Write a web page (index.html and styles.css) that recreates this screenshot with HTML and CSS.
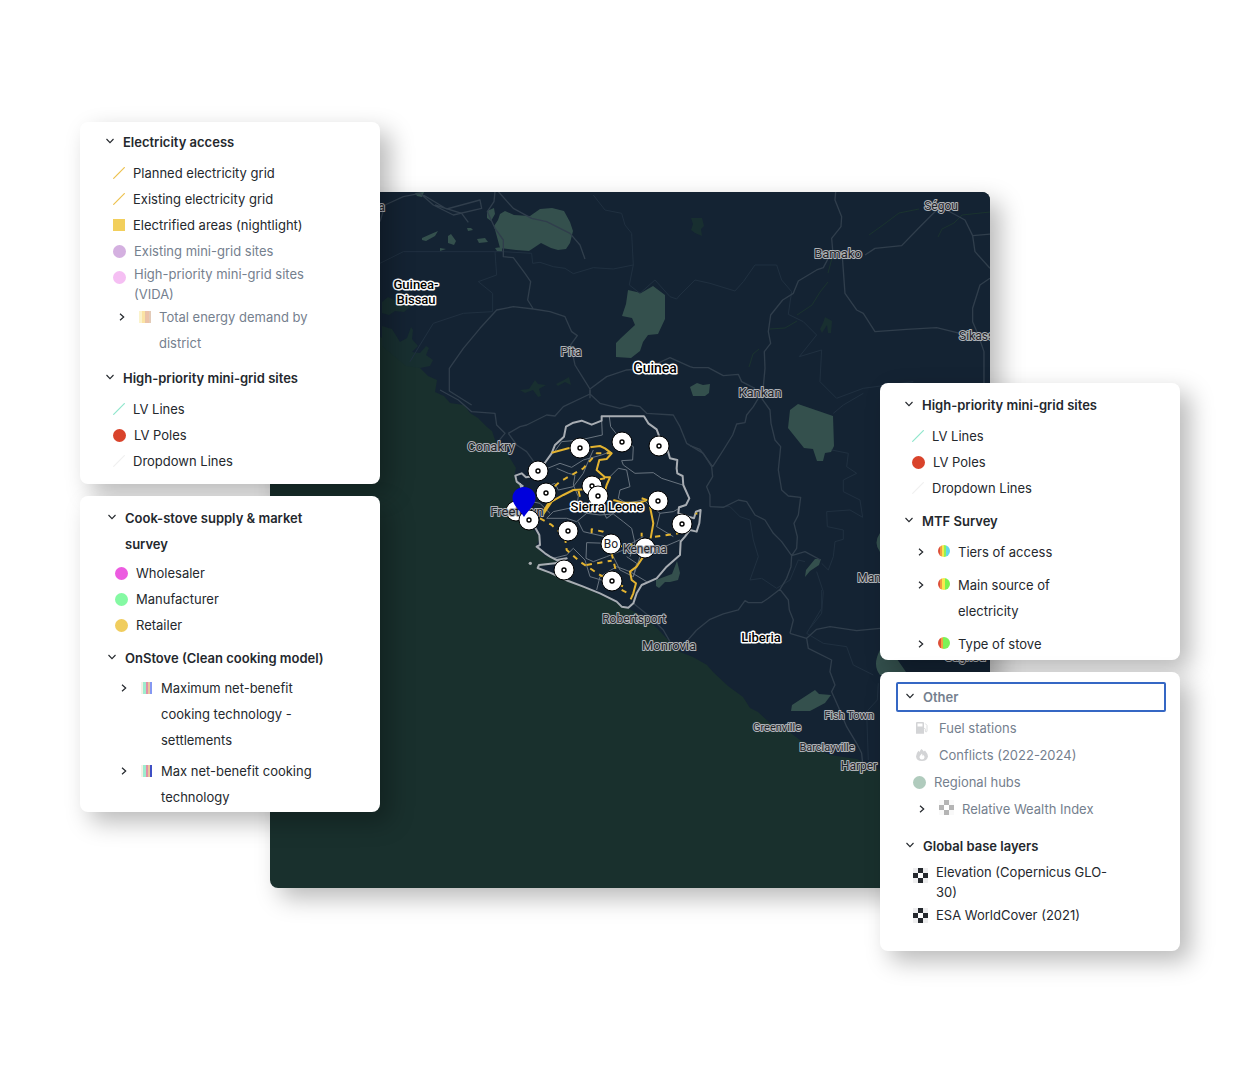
FILE: index.html
```html
<!DOCTYPE html>
<html lang="en">
<head>
<meta charset="utf-8">
<meta name="viewport" content="width=device-width, initial-scale=1">
<title>Sierra Leone energy access map</title>
<link rel="stylesheet" href="styles.css">
</head>
<body>
<svg class="defs" aria-hidden="true">
  <symbol id="down" viewBox="0 0 8 6"><path d="M.5 1 4 4.700 7.500 1" fill="none" stroke="currentColor" stroke-width="1.100"/></symbol>
  <symbol id="right" viewBox="0 0 6 8"><path d="M1 .7 4.700 4 1 7.300" fill="none" stroke="currentColor" stroke-width="1.200"/></symbol>
  <symbol id="line" viewBox="0 0 12 12"><path d="M.3 11.700 11.700.3" fill="none" stroke="currentColor" stroke-width="1.200"/></symbol>
  <symbol id="checks" viewBox="0 0 15 15"><path d="M0 0h15v15H0z" fill="currentColor" opacity=".08"/><path d="M5 0h5v5H5zM0 5h5v5H0zM10 5h5v5h-5zM5 10h5v5H5z" fill="currentColor"/><path d="M5 5h5v5H5z" fill="#fff"/></symbol>
  <symbol id="fuel" viewBox="0 0 12 12"><path fill="currentColor" fill-rule="evenodd" d="M1 0h6q1 0 1 1v10H0V1q0-1 1-1zm.5 1.500v3h5v-3zM0 11.200h8v.8H0z"/><path d="M8 6.500h.6q.7 0 .7.7V9q0 .9.800.9T11 9V3.500L9.300 1.500" fill="none" stroke="currentColor" stroke-width=".8"/></symbol>
  <symbol id="fire" viewBox="0 0 12 12"><path fill="currentColor" fill-rule="evenodd" d="M5.500 0Q7 1 7.800 2.600L9 1.500Q12 5 12 7.500 11 12 6 12 .5 12 0 7.500.3 4 2.500 1.800L3.600 2.900Q4.200 1 5.500 0zM6 4.500Q3.400 7 3.500 8.500 3.800 10.500 6 10.500T8.500 8.500Q8.600 7 7.600 6l-.9.900z"/></symbol>
</svg>

<main class="board">
  <figure class="map">
    <svg viewBox="270 192 720 696" preserveAspectRatio="xMidYMid slice" role="img" aria-label="Map of Sierra Leone and its neighbours">
      <rect class="sea" x="270" y="192" width="720" height="696"/>
      <path class="land" d="M270 192H990V800L930 782 880 770 868 764 857 759 830 755 815 748 800 740 784 728 770 723 758 712 750 708 743 697 728 686 713 672 707 665 693 657 680 652 668 640 657 628 643 617 628 608 600 595 570 580 538 567 555 564 562 560 545 556 536 546 540 538 534 530 529 530 514 516 513 510 524 504 526 490 518 482 514 477 516 468 507 453 500 447 495 440 492 431 487 427 478 418 470 413 464 405 450 403 444 396 435 392 437 380 428 376 420 368 410 363 404 354 397 350 390 344 382 338 340 310 270 300z"/>

      <!-- Wetlands and mangroves along the coast -->
      <g class="wet">
        <path d="M382 302l6-5 6 3 7-1 5 6 8-1-5 4-5 4-9-1-6 4-7-2zM382 326l10 3 8 13 7-4 4-11 2 3-1 9 6 7-6 6 8 1 6-7 3 2-3 7 7 5-3 6-10 2-14-2-24-20zM520 390l9-1 6-9 3 4 8 1-7 4 2 7-3 1-5-7-8 3zM556 384l8-4 5-3 2 8-6-3-7 4zM691 218l11 0 2 8-3 3 1 7-7-3-4-3 2-6zM825 317l7 4-1 12-3 0-1-8-5 8-2-4 3-6z"/>
        <path class="stroke" d="M869 235l14-10 16-12 20-4M938 237l4-8 12-6 8-8 28-3M797 315l15-10 8-13 8-10M770 329l15-1 12-7M749 367l4-13 6-5M828 273l4-15"/>
      </g>

      <!-- Parks -->
      <path class="park" d="M500 214l5-3 9 4 16 1 10-7 12-1 12 3 6 11 3 9-3 12-4 6-8 1-7-2-10-5-12 8-13-1-16-2-6-22 4-6zM487 211l7-3 1 6-4 7-4-3zM422 238l9-4 7-3-3 5-9 5-4-1zM448 236l3-2 5 7-2 4-6-2zM467 228h4l2 2-5 1zM477 239l8-1 3 4-9 1zM440 248l6 1-6 2zM495 248l7-1v5l-5-1zM415 193l9-1-2 5-5-1zM628 290l13 3 12-7 12 9v24l-7 15-10 1-5 7-3 9-9 7-15-1 0-14 5-5 14-13-3-7-10-2 4-12zM690 387l7-4 6 2 7-1-1 9-4 3-12 0zM788 428l2-18 8-6 35 12 1 30-3 6-6 1-2 8-6 0-4-12-9-1zM805 577l1-7 9-11 6 0-2 6-9 6zM791 711l1-6 23-15 4 4 12 1-6 8-15 8zM880 533q-7 10 0 19zM656 580l16-6 5-13 3 12-2 7-8 2-5 0-6 6-3-2zM880 650q-8 15 0 25h28q-12-18-16-22z"/>

      <!-- Country borders: north, then east, then the Liberian south-east -->
      <g class="border">
        <path transform="translate(380 185) scale(.3333)" d="M0 235 70 200H370L455 205 458 235 480 232 520 245 555 250 580 266 640 248 700 252 760 240 755 145 735 120 725 85 675 75 640 30M760 240 748 300 780 325 825 285 870 335 890 342 900 330 930 300 945 285 990 295 1065 318 1090 290 1125 240 1190 240 1205 285 1235 320 1225 388 1270 410 1310 450 1258 515 1325 495 1320 590 1370 640 1450 610 1600 590M345 200 350 270 295 290 338 325 338 380 250 385 160 415 120 480 90 530"/>
        <path transform="translate(690 390) scale(.3333)" d="M60 350 120 350 150 380 180 390 190 450 205 500 180 570 215 565 260 595 300 570 325 510 345 515M380 545 400 605 395 670 360 715M430 70 460 45 520 10M425 180 475 190 470 230 500 250 460 270 460 305 510 330 518 382 480 360 410 365 412 410 460 420 460 448 435 455 430 500 415 540 395 520"/>
        <path transform="translate(590 590) scale(.3333)" d="M695 0V55L650 130 700 160 770 170 790 225 850 255M865 280 862 330 830 365 835 510"/>
      </g>

      <!-- Main roads -->
      <g class="road">
        <path transform="translate(380 185) scale(.3333)" d="M345 20 342 50 322 80 345 130 370 165 370 215 400 218 435 265 452 290 443 345 460 372 510 380 555 395 575 440 592 452 572 480 585 540 610 580 630 612M355 20 400 70 455 100 500 110 570 145 600 180 615 222M460 372 400 365 350 375 300 430 250 490 208 550 208 618 275 660M630 612 680 575 740 555 800 550 870 518 930 545 940 548 985 548 1030 572 1075 568 1085 590 1125 610M630 612 630 640M0 110 15 60 70 35 120 25 160 60 220 90 305 70 300 45 200 72 130 30M265 112 245 85 165 60"/>
        <path transform="translate(680 185) scale(.3333)" d="M467 20 465 45 485 95 483 125 455 160 458 195 430 248 410 255 355 288 340 325 308 345 272 390 265 440 272 475 253 500 255 550 250 605M487 215 495 325 530 375 550 385 585 440 680 433 770 428 840 445M555 210 585 190 665 182 720 125 770 75M800 75 855 105 878 152 935 147M878 152 885 200 930 250M930 280 900 300 878 370 878 410 895 450 912 500 912 600"/>
        <path transform="translate(440 390) scale(.3333)" d="M0 0 55 30 95 65 165 70 170 105 195 130 170 160M205 130 240 110 260 105 320 75 345 78 370 50 450 12 480 40 540 55 570 45 600 50 620 70 700 75 720 110 740 160 790 190 815 230 818 260 800 290 810 315 810 350M450 12V0M205 130 230 165 260 185 285 220"/>
        <path transform="translate(690 390) scale(.3333)" d="M205 25 190 50 170 75 165 98 140 102 128 135 100 180 68 230M60 350 100 352 145 330 170 335 195 375 225 390 250 430 275 455 305 497 303 530 290 565 270 598 235 625 215 638 175 638 165 632 145 660 100 672 60 688 20 720M215 25 240 60 243 100 255 150 272 170 265 240 275 300 295 318 332 322 325 375 312 400 322 440 320 475 305 497 345 485 392 510M270 598 295 630 298 660 310 690 300 730M0 167 30 178 68 230"/>
        <path transform="translate(590 590) scale(.3333)" d="M320 120 285 160M130 40 180 80 220 120 240 155M600 130 650 145 655 175 725 210 720 245 735 285 725 305 745 350 770 410 800 460 815 490 818 520M650 145 680 118 720 110 800 122 870 115"/>
      </g>

      <g transform="translate(440 390) scale(.3333)">
        <!-- District boundaries -->
        <path class="district" d="M485 92 487 135 420 150 365 155 340 190M508 80 512 110 540 145 580 170 578 210 545 212 550 225 585 250 640 248 665 265 728 285M310 240 360 220 395 232 430 210 485 195 510 185M350 235 385 250 405 255 400 285 415 320 410 350 340 365 320 385 380 385 410 395 440 370 480 375 520 372 550 395 575 415 585 460 570 500M320 290 345 280 355 300 400 290M510 260 535 235 560 240 570 290 540 300 535 325 560 340M440 370 450 330 480 345 500 385 560 340 610 330 660 370 700 365 735 345M415 395 430 425 495 440 500 460 440 458 438 505 460 515 500 500 550 480 575 460 610 440M340 505 380 495 400 475 435 510 450 560 500 575M520 500 540 540 580 560 600 500 650 480 720 450M470 600 480 560 530 530 570 545 620 575M560 500 590 520 580 560M250 330 300 340 330 370M460 180 440 225 430 250 400 290M660 370 650 410 700 440"/>
        <!-- National border -->
        <path class="nation" d="M335 190 345 165 372 140 378 110 400 98 425 92 455 104 485 92V79H612L625 100 650 118 658 140 680 170 690 205 712 210 710 235 712 250 728 258 730 285 748 325 738 345 717 352 715 370 745 380 762 385 768 365 782 360 778 400 770 425 750 420 735 440 722 455 720 495 680 530 650 565 605 585 590 610 580 640 565 653 545 650 530 635 480 610 430 590 385 573 330 548 293 534 297 525 345 520 380 505 350 510 330 500 315 490 290 470 300 465 298 435 285 412M250 290 230 275 226 257 245 250 258 262 285 258 310 225 335 190M240 280 248 310"/>
        <circle cx="271" cy="520" r="5" fill="#a8adb0"/>
        <!-- Existing and planned grid -->
        <path class="grid" d="M335 188 385 175 420 172M450 172 480 168 495 175 515 190 500 207 478 210 470 240 495 262 510 262 500 285 490 320M495 265 480 268M520 330 550 338 600 338 620 330 605 325M630 350 640 400 632 445M610 500 590 530 570 545 575 570 588 580 580 610 572 628M310 365 325 340 370 315 400 300 440 298M305 380 335 335M415 300 420 320"/>
        <path class="grid dashed" d="M320 310 360 275 430 235 470 190 520 190M300 385 335 405 375 440 380 480 420 515 480 555 560 595M455 430V418L490 425 515 450M515 490 527 540M440 525 480 518 515 512M645 440 715 430M530 470 605 460 605 428M545 600 560 608"/>
        <path d="M764 372l8-6v8z" fill="#e8b820"/>
      </g>

      <g class="pins">
        <g><circle cx="580" cy="448" r="10"/><circle class="dot" cx="580" cy="448" r="2"/></g>
        <g><circle cx="622" cy="442" r="10"/><circle class="dot" cx="622" cy="442" r="2"/></g>
        <g><circle cx="659" cy="446" r="10"/><circle class="dot" cx="659" cy="446" r="2"/></g>
        <g><circle cx="538" cy="471" r="10"/><circle class="dot" cx="538" cy="471" r="2"/></g>
        <g><circle cx="546" cy="493" r="10"/><circle class="dot" cx="546" cy="493" r="2"/></g>
        <g><circle cx="592" cy="486" r="10"/><circle class="dot" cx="592" cy="486" r="2"/></g>
        <g><circle cx="598" cy="496" r="10"/><circle class="dot" cx="598" cy="496" r="2"/></g>
        <g><circle cx="658" cy="501" r="10"/><circle class="dot" cx="658" cy="501" r="2"/></g>
        <g><circle cx="682" cy="524" r="10"/><circle class="dot" cx="682" cy="524" r="2"/></g>
        <g><circle cx="568" cy="531" r="10"/><circle class="dot" cx="568" cy="531" r="2"/></g>
        <g><circle cx="564" cy="570" r="10"/><circle class="dot" cx="564" cy="570" r="2"/></g>
        <g><circle cx="612" cy="581" r="10"/><circle class="dot" cx="612" cy="581" r="2"/></g>
        <circle cx="611" cy="544" r="10"/>
        <circle cx="645" cy="548" r="10"/>
        <circle cx="516" cy="511" r="10"/>
      </g>

      <g class="city">
        <text x="491" y="451">Conakry</text>
        <text x="838" y="258">Bamako</text>
        <text x="760" y="397">Kankan</text>
        <text x="669" y="650">Monrovia</text>
        <text x="517" y="516">Freetown</text>
        <text class="plain" x="611" y="548">Bo</text>
        <text class="small" x="645" y="553">Kenema</text>
        <text class="small" x="571" y="356">Pita</text>
        <text class="small" x="941" y="210">Ségou</text>
        <text class="small" x="980" y="340">Sikasso</text>
        <text class="small" x="869" y="582">Man</text>
        <text class="small" x="634" y="623">Robertsport</text>
        <text class="small" x="859" y="770">Harper</text>
        <text class="small" x="965" y="661">Gagnoa</text>
        <text class="tiny" x="777" y="731">Greenville</text>
        <text class="tiny" x="827" y="751">Barclayville</text>
        <text class="tiny" x="849" y="719">Fish Town</text>
        <text class="small" x="363" y="211">Bignona</text>
      </g>
      <g class="country">
        <text x="416" y="289">Guinea-</text>
        <text x="416" y="304">Bissau</text>
        <text class="wide" x="655" y="373">Guinea</text>
        <text x="607" y="511">Sierra Leone</text>
        <text x="761" y="642">Liberia</text>
      </g>

      <g class="pins"><circle cx="529" cy="520" r="10"/><circle class="dot" cx="529" cy="520" r="2"/></g>
      <path fill="#0000dc" d="M524 487c7 0 11.500 5 11.500 11 0 7-8 13-11.500 19-3.500-6-11.500-12-11.500-19 0-6 4.500-11 11.500-11z"/>
    </svg>
  </figure>

  <div class="stack left">
    <section class="panel power">
      <h2><button type="button" aria-expanded="true"><svg class="down"><use href="#down"/></svg><span>Electricity access</span></button></h2>
      <ul>
        <li><svg class="line gold"><use href="#line"/></svg><span>Planned electricity grid</span></li>
        <li><svg class="line gold"><use href="#line"/></svg><span>Existing electricity grid</span></li>
        <li><i class="square"></i><span>Electrified areas (nightlight)</span></li>
        <li class="off"><i class="disc lilac"></i><span>Existing mini-grid sites</span></li>
        <li class="off tight"><i class="disc rose"></i><span>High-priority mini-grid sites (VIDA)</span></li>
        <li class="off"><button type="button" aria-expanded="false"><svg class="right"><use href="#right"/></svg><i class="ramp demand"></i><span>Total energy demand by district</span></button></li>
      </ul>
      <h2><button type="button" aria-expanded="true"><svg class="down"><use href="#down"/></svg><span>High-priority mini-grid sites</span></button></h2>
      <ul>
        <li><svg class="line mint"><use href="#line"/></svg><span>LV Lines</span></li>
        <li><i class="disc red"></i><span>LV Poles</span></li>
        <li><svg class="line pale"><use href="#line"/></svg><span>Dropdown Lines</span></li>
      </ul>
    </section>

    <section class="panel cooking">
      <h2><button type="button" aria-expanded="true"><svg class="down"><use href="#down"/></svg><span>Cook-stove supply &amp; market survey</span></button></h2>
      <ul>
        <li><i class="disc pink"></i><span>Wholesaler</span></li>
        <li><i class="disc green"></i><span>Manufacturer</span></li>
        <li><i class="disc yellow"></i><span>Retailer</span></li>
      </ul>
      <h2><button type="button" aria-expanded="true"><svg class="down"><use href="#down"/></svg><span>OnStove (Clean cooking model)</span></button></h2>
      <ul class="nested">
        <li><button type="button" aria-expanded="false"><svg class="right"><use href="#right"/></svg><i class="ramp settle"></i><span>Maximum net-benefit cooking technology - settlements</span></button></li>
        <li><button type="button" aria-expanded="false"><svg class="right"><use href="#right"/></svg><i class="ramp benefit"></i><span>Max net-benefit cooking technology</span></button></li>
      </ul>
    </section>
  </div>

  <div class="stack side">
    <section class="panel survey">
      <h2><button type="button" aria-expanded="true"><svg class="down"><use href="#down"/></svg><span>High-priority mini-grid sites</span></button></h2>
      <ul>
        <li><svg class="line mint"><use href="#line"/></svg><span>LV Lines</span></li>
        <li><i class="disc red"></i><span>LV Poles</span></li>
        <li><svg class="line pale"><use href="#line"/></svg><span>Dropdown Lines</span></li>
      </ul>
      <h2><button type="button" aria-expanded="true"><svg class="down"><use href="#down"/></svg><span>MTF Survey</span></button></h2>
      <ul class="nested">
        <li><button type="button" aria-expanded="false"><svg class="right"><use href="#right"/></svg><i class="ramp round tiers"></i><span>Tiers of access</span></button></li>
        <li><button type="button" aria-expanded="false"><svg class="right"><use href="#right"/></svg><i class="ramp round source"></i><span>Main source of electricity</span></button></li>
        <li><button type="button" aria-expanded="false"><svg class="right"><use href="#right"/></svg><i class="ramp round stove"></i><span>Type of stove</span></button></li>
      </ul>
    </section>

    <section class="panel other">
      <h2 class="focused"><button type="button" aria-expanded="true"><svg class="down"><use href="#down"/></svg><span>Other</span></button></h2>
      <ul class="spaced">
        <li class="off glyph"><svg><use href="#fuel"/></svg><span>Fuel stations</span></li>
        <li class="off glyph"><svg><use href="#fire"/></svg><span>Conflicts (2022-2024)</span></li>
        <li class="off"><i class="disc sage"></i><span>Regional hubs</span></li>
        <li class="off"><button type="button" aria-expanded="false"><svg class="right"><use href="#right"/></svg><svg class="checks"><use href="#checks"/></svg><span>Relative Wealth Index</span></button></li>
      </ul>
      <h2><button type="button" aria-expanded="true"><svg class="down"><use href="#down"/></svg><span>Global base layers</span></button></h2>
      <ul>
        <li class="tight"><svg class="checks"><use href="#checks"/></svg><span>Elevation (Copernicus GLO-30)</span></li>
        <li><svg class="checks"><use href="#checks"/></svg><span>ESA WorldCover (2021)</span></li>
      </ul>
    </section>
  </div>
</main>
</body>
</html>
```
FILE: styles.css
```css
* { box-sizing: border-box; }

body {
  margin: 0;
  background: #fff;
  color: #24282d;
  font: 13px/26px Inter, "Liberation Sans", sans-serif;
}

.defs { position: absolute; width: 0; height: 0; }

/* The map sits behind; the panel stacks overlap its two sides. */
.board {
  display: grid;
  grid-template-columns: 190px 110px minmax(0, 1fr) 110px 190px;
  align-items: start;
  padding: 122px 80px;
}

.map {
  grid-area: 1 / 2 / 2 / 5;
  margin: 70px 0 0;
  aspect-ratio: 720 / 696;
  border-radius: 8px;
  overflow: hidden;
  box-shadow: 10px 10px 24px rgba(0, 0, 0, .28);
}
.map > svg { display: block; width: 100%; height: 100%; }

.stack { display: flex; flex-direction: column; gap: 12px; }
.left { grid-area: 1 / 1 / 2 / 3; }
.side { grid-area: 1 / 4 / 2 / 6; margin-top: 261px; }

/* Map drawing */
.sea { fill: #19302d; }
.land { fill: #142333; }
.park { fill: #34504d; }
.wet { fill: #182f30; }
.wet .stroke { fill: none; stroke: #1a332f; }
.border, .road, .district, .nation, .grid { fill: none; stroke-linejoin: round; }
.border { stroke: #203040; stroke-width: 3; }
.road { stroke: #303e4c; stroke-width: 4; }
.district { stroke: #68737e; stroke-width: 3; }
.nation { stroke: #a8adb3; stroke-width: 6; }
.grid { stroke: #e3b330; stroke-width: 6; }
.dashed { stroke-dasharray: 16 16; }
.pins circle { fill: #fff; stroke: #000; stroke-width: 1; }
.pins .dot { stroke-width: 1.4; }

.city, .country {
  font-family: Roboto, "Liberation Sans", sans-serif;
  font-size: 13px;
  text-anchor: middle;
  paint-order: stroke;
  stroke-linejoin: round;
}
.city { fill: #1f2328; stroke: #aeb2b7; stroke-width: 2; }
.country { fill: #000; stroke: #fff; stroke-width: 3; font-weight: 500; }
.city .plain { font-size: 12px; stroke: #fff; }
.city .small { font-size: 12px; }
.city .tiny { font-size: 11px; }
.country .wide { font-size: 14px; }

/* Layer panels */
.panel {
  --indent: 26px;
  padding: 7px 50px 10px var(--indent);
  border-radius: 8px;
  background: #fff;
  box-shadow: 10px 10px 24px rgba(0, 0, 0, .28);
}
.panel h2 { margin: 0; font-size: 13px; font-weight: 600; }
.panel ul { margin: 0; padding: 5px 0 9px; list-style: none; }
.panel ul:last-child { padding-bottom: 0; }

.panel button {
  display: flex;
  align-items: flex-start;
  width: 100%;
  padding: 0;
  border: 0;
  background: none;
  color: inherit;
  font: inherit;
  text-align: left;
}
.panel svg, .panel i { flex: none; }

h2 button { gap: 9px; }
.down { width: 8px; height: 6px; margin-top: 9px; color: #24282d; }

.panel li { display: flex; gap: 8px; padding-left: 7px; }
.panel .off { color: #75808e; }
.panel .tight { line-height: 20px; }
.panel .glyph { gap: 11px; padding-left: 10px; }
.glyph svg { width: 12px; height: 12px; margin-top: 7px; color: #d3d4d6; }

.panel li button { padding-left: 6px; }
.right { width: 6px; height: 8px; margin-top: 9px; color: #24282d; }
li .right { margin-right: 14px; }
li button .ramp { margin-right: 8px; }

.line { width: 12px; height: 12px; margin-top: 7px; }
.gold { color: #edc14e; }
.mint { color: #8fe6cc; }
.pale { color: #f0f0f0; }

.square { width: 12px; height: 12px; margin-top: 7px; background: #f2cf5c; }
.disc { width: 13px; height: 13px; margin-top: 7px; border-radius: 50%; }
.lilac { background: #d4b0e0; }
.rose { background: #f5bff3; }
.red { background: #d9432b; }
.pink { background: #ec5be0; }
.green { background: #85f9a3; }
.yellow { background: #f0cd5e; }
.sage { background: #b0cbbd; }

.ramp { width: 12px; height: 12px; margin-top: 7px; }
.round { border-radius: 50%; margin-top: 6px; }
.demand { background: linear-gradient(90deg, #fbf3cc 0 3px, #fbe3a4 3px 6px, #e8c4a8 6px 7px, #ecc2a8 7px 10px, #e3cbb8 10px); }
.settle { background: linear-gradient(90deg, #f4f1e6 0 2px, #9eeccf 2px 5px, #e38fa8 5px 7px, #e8c79c 7px 9px, #8598f2 9px 11px, #fff 11px); }
.benefit { background: linear-gradient(90deg, #f4f1e6 0 2px, #9eeccf 2px 5px, #e38fa8 5px 7px, #e8c79c 7px 9px, #3f4fc4 9px 11px, #fff 11px); }
.tiers { background: linear-gradient(90deg, #dd5038 0 2px, #f39a42 2px 4px, #f6e94e 4px 6px, #8ff257 6px 8px, #62d9e8 8px); }
.source { background: linear-gradient(90deg, #dd5038 0 2px, #f39a42 2px 4px, #f6e94e 4px 7px, #7cf24e 7px); }
.stove { background: linear-gradient(90deg, #dd5038 0 3px, #f3a042 3px 5px, #7cf257 5px); }

.checks { width: 15px; height: 15px; margin-top: 6px; }
.off .checks { margin: 4px 8px 0 0; color: #b4b4b4; }

.cooking { --indent: 28px; padding-top: 9px; padding-bottom: 2px; }
.cooking ul { padding: 3px 0 7px; }
.cooking .nested { display: grid; gap: 5px; padding-top: 4px; }

.survey { --indent: 25px; padding: 9px 80px 3px var(--indent); }
.survey ul { padding-bottom: 7px; }
.survey .nested { display: grid; gap: 7px; }

.other { padding: 10px 66px 23px var(--indent); }
.other .focused {
  margin: 0 -52px 0 -10px;
  padding: 0 8px;
  border: 2px solid #3567c4;
  border-radius: 2px;
  color: #75808e;
}
.other ul { padding-top: 3px; padding-bottom: 11px; }
.other .spaced { display: grid; gap: 1px; }
```
